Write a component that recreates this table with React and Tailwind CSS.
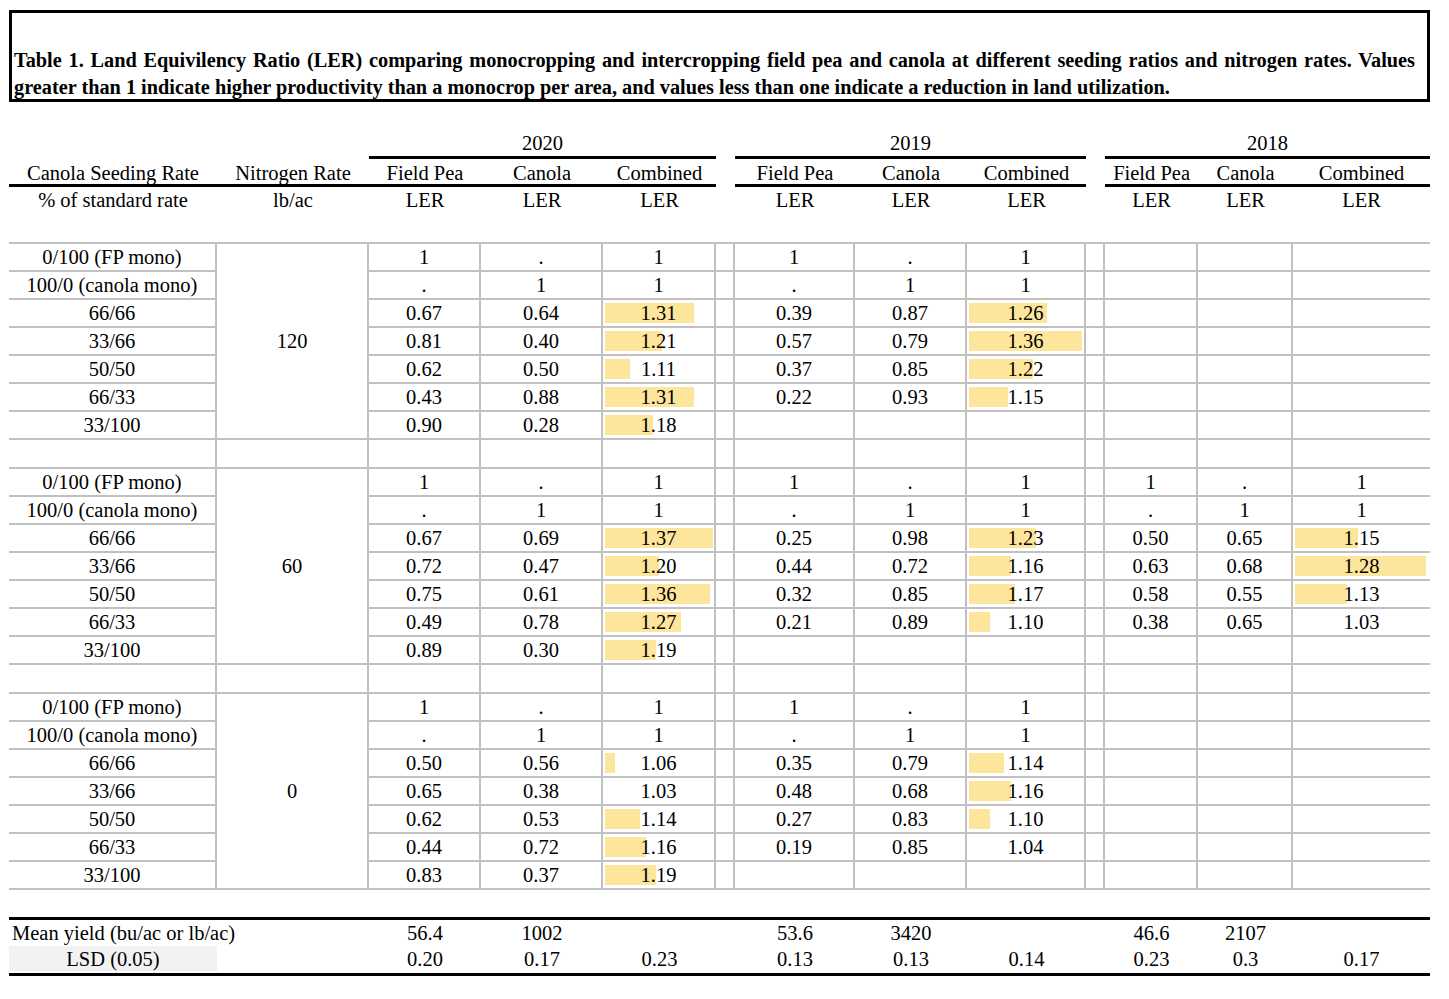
import React from 'react';

// column widths, left to right (spacer columns between the years)
const COLS = [
  'w-[208px]', 'w-[152px]',
  'w-[112px]', 'w-[122px]', 'w-[113px]', 'w-[19px]',
  'w-[120px]', 'w-[112px]', 'w-[119px]', 'w-[19px]',
  'w-[93px]', 'w-[95px]', 'w-[137px]',
];

const YEARS = [
  { label: '2020', min: 1.03, max: 1.37, full: 108 },
  { label: '2019', min: 1.04, max: 1.36, full: 113 },
  { label: '2018', min: 1.03, max: 1.28, full: 131 },
];

const FP = ['1', '.', '1'];
const CM = ['.', '1', '1'];

const GROUPS = [
  {
    n: '120',
    rows: [
      ['0/100 (FP mono)', FP, FP, null],
      ['100/0 (canola mono)', CM, CM, null],
      ['66/66', ['0.67', '0.64', '1.31'], ['0.39', '0.87', '1.26'], null],
      ['33/66', ['0.81', '0.40', '1.21'], ['0.57', '0.79', '1.36'], null],
      ['50/50', ['0.62', '0.50', '1.11'], ['0.37', '0.85', '1.22'], null],
      ['66/33', ['0.43', '0.88', '1.31'], ['0.22', '0.93', '1.15'], null],
      ['33/100', ['0.90', '0.28', '1.18'], null, null],
    ],
  },
  {
    n: '60',
    rows: [
      ['0/100 (FP mono)', FP, FP, FP],
      ['100/0 (canola mono)', CM, CM, CM],
      ['66/66', ['0.67', '0.69', '1.37'], ['0.25', '0.98', '1.23'], ['0.50', '0.65', '1.15']],
      ['33/66', ['0.72', '0.47', '1.20'], ['0.44', '0.72', '1.16'], ['0.63', '0.68', '1.28']],
      ['50/50', ['0.75', '0.61', '1.36'], ['0.32', '0.85', '1.17'], ['0.58', '0.55', '1.13']],
      ['66/33', ['0.49', '0.78', '1.27'], ['0.21', '0.89', '1.10'], ['0.38', '0.65', '1.03']],
      ['33/100', ['0.89', '0.30', '1.19'], null, null],
    ],
  },
  {
    n: '0',
    rows: [
      ['0/100 (FP mono)', FP, FP, null],
      ['100/0 (canola mono)', CM, CM, null],
      ['66/66', ['0.50', '0.56', '1.06'], ['0.35', '0.79', '1.14'], null],
      ['33/66', ['0.65', '0.38', '1.03'], ['0.48', '0.68', '1.16'], null],
      ['50/50', ['0.62', '0.53', '1.14'], ['0.27', '0.83', '1.10'], null],
      ['66/33', ['0.44', '0.72', '1.16'], ['0.19', '0.85', '1.04'], null],
      ['33/100', ['0.83', '0.37', '1.19'], null, null],
    ],
  },
];

const MEAN = [['56.4', '1002', ''], ['53.6', '3420', ''], ['46.6', '2107', '']];
const LSD = [['0.20', '0.17', '0.23'], ['0.13', '0.13', '0.14'], ['0.23', '0.3', '0.17']];

const serif = "font-['Liberation_Serif','Times_New_Roman',serif]";

const ColGroup = () => (
  <colgroup>
    {COLS.map((w, i) => (
      <col key={i} className={w} />
    ))}
  </colgroup>
);

const line = 'border-[#c0c0c0]';

const Cell = ({ children, first, last, bar, className = '' }) => (
  <td
    className={`relative p-0 pt-px text-center align-middle whitespace-nowrap border-b-2 ${line} ${
      last ? '' : 'border-r-2'
    } ${first ? 'border-t-2' : ''} ${className}`}
  >
    {bar > 0 && (
      <div className="absolute left-[2px] top-[3px] bottom-[3px] bg-[#fee59c]" style={{ width: bar }} />
    )}
    <span className="relative">{children}</span>
  </td>
);

const barWidth = (v, y) => {
  const n = parseFloat(v);
  if (isNaN(n) || n <= y.min) return 0;
  return Math.round(((n - y.min) / (y.max - y.min)) * y.full);
};

const DataRow = ({ row, idx, first, height, nitrogen }) => {
  const [label, ...years] = row;
  return (
    <tr>
      <Cell first={first} className={height}>
        {label}
      </Cell>
      {idx === 0 && (
        <td
          rowSpan={7}
          className={`p-0 text-center align-middle border-b-2 border-r-2 ${line} ${first ? 'border-t-2' : ''}`}
        >
          {nitrogen}
        </td>
      )}
      {years.map((vals, yi) => (
        <React.Fragment key={yi}>
          {[0, 1, 2].map((c) => (
            <Cell
              key={c}
              first={first}
              last={yi === 2 && c === 2}
              bar={vals && c === 2 && idx >= 2 ? barWidth(vals[2], YEARS[yi]) : 0}
            >
              {vals ? vals[c] : ''}
            </Cell>
          ))}
          {yi < 2 && <Cell first={first} />}
        </React.Fragment>
      ))}
    </tr>
  );
};

const EmptyRow = () => (
  <tr>
    {COLS.map((_, i) => (
      <Cell key={i} last={i === COLS.length - 1} className={i === 0 ? 'h-[29px]' : ''} />
    ))}
  </tr>
);

const Header = () => {
  const sub = 'p-0 text-center align-bottom leading-[22px] whitespace-nowrap';
  const ruled = `${sub} border-b-[3px] border-black`;
  return (
    <table className="table-fixed border-separate border-spacing-0 w-[1421px]">
      <ColGroup />
      <tbody>
        <tr>
          <td className="h-[57px] p-0" />
          <td className="p-0" />
          {YEARS.map((y, i) => (
            <React.Fragment key={y.label}>
              <td colSpan={3} className={`${ruled} pb-[2px]`}>
                {y.label}
              </td>
              {i < 2 && <td className="p-0" />}
            </React.Fragment>
          ))}
        </tr>
        <tr>
          <td className={`${ruled} h-[28px]`}>Canola Seeding Rate</td>
          <td className={ruled}>Nitrogen Rate</td>
          {YEARS.map((y, i) => (
            <React.Fragment key={y.label}>
              <td className={ruled}>Field Pea</td>
              <td className={ruled}>Canola</td>
              <td className={ruled}>Combined</td>
              {i < 2 && <td className="p-0" />}
            </React.Fragment>
          ))}
        </tr>
        <tr>
          <td className="h-[55px] p-0 pt-[2px] text-center leading-[22px] align-top whitespace-nowrap">
            % of standard rate
          </td>
          <td className="p-0 pt-[2px] text-center leading-[22px] align-top">lb/ac</td>
          {YEARS.map((y, i) => (
            <React.Fragment key={y.label}>
              {[0, 1, 2].map((c) => (
                <td key={c} className="p-0 pt-[2px] text-center leading-[22px] align-top">
                  LER
                </td>
              ))}
              {i < 2 && <td className="p-0" />}
            </React.Fragment>
          ))}
        </tr>
      </tbody>
    </table>
  );
};

const Footer = () => (
  <table className="mt-[27px] table-fixed border-separate border-spacing-0 w-[1421px] border-t-[3px] border-b-[3px] border-black">
    <ColGroup />
    <tbody>
      <tr>
        <td className="h-[26px] p-0 pl-[3px] text-left leading-[22px] whitespace-nowrap overflow-visible">
          Mean yield (bu/ac or lb/ac)
        </td>
        <td className="p-0" />
        {MEAN.map((vals, i) => (
          <React.Fragment key={i}>
            {vals.map((v, c) => (
              <td key={c} className="p-0 text-center leading-[22px]">
                {v}
              </td>
            ))}
            {i < 2 && <td className="p-0" />}
          </React.Fragment>
        ))}
      </tr>
      <tr>
        <td className="h-[27px] p-0 align-top">
          <div className="h-[25px] leading-[27px] bg-[#f2f2f2] text-center">LSD (0.05)</div>
        </td>
        <td className="p-0" />
        {LSD.map((vals, i) => (
          <React.Fragment key={i}>
            {vals.map((v, c) => (
              <td key={c} className="p-0 text-center align-top leading-[27px]">
                {v}
              </td>
            ))}
            {i < 2 && <td className="p-0" />}
          </React.Fragment>
        ))}
      </tr>
    </tbody>
  </table>
);

export default function App() {
  return (
    <div className={`w-[1449px] min-h-[999px] bg-white text-black ${serif} text-[20.5px]`}>
      <div className="ml-[9px] pt-[10px]">
        <div className="w-[1421px] h-[92px] border-[3px] border-black flex flex-col justify-end pl-[2px] font-bold text-[20.3px] leading-[27px]">
          <div className="w-[1401px] text-justify [text-align-last:justify]">
            Table 1. Land Equivilency Ratio (LER) comparing monocropping and intercropping field pea and canola at
            different seeding ratios and nitrogen rates. Values
          </div>
          <div className="-mb-[2px] whitespace-nowrap">
            greater than 1 indicate higher productivity than a monocrop per area, and values less than one indicate a
            reduction in land utilization.
          </div>
        </div>

        <Header />

        <table className="table-fixed border-separate border-spacing-0 w-[1421px] leading-[21px]">
          <ColGroup />
          <tbody>
            {GROUPS.map((g, gi) => (
              <React.Fragment key={g.n}>
                {g.rows.map((row, ri) => (
                  <DataRow
                    key={ri}
                    row={row}
                    idx={ri}
                    first={gi === 0 && ri === 0}
                    height={gi === 0 && ri === 0 ? 'h-[30px]' : 'h-[28px]'}
                    nitrogen={g.n}
                  />
                ))}
                {gi < GROUPS.length - 1 && <EmptyRow />}
              </React.Fragment>
            ))}
          </tbody>
        </table>

        <Footer />
      </div>
    </div>
  );
}
